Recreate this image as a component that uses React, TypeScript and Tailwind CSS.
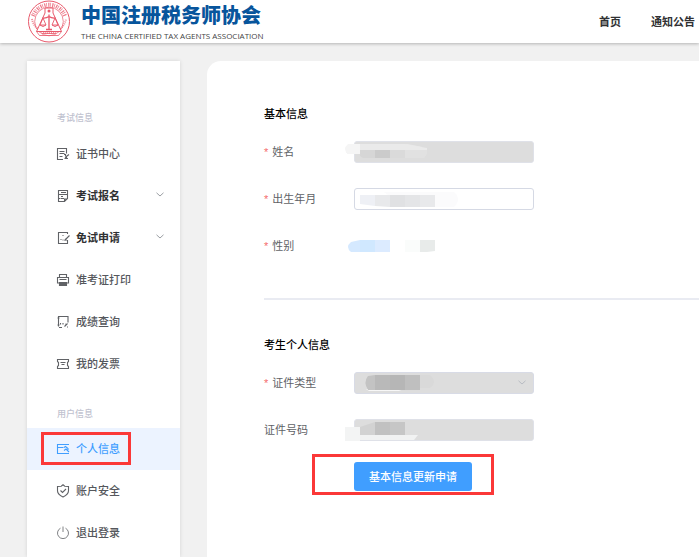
import type { ReactNode } from 'react';

type IconName = 'certificate' | 'signup' | 'exempt' | 'print' | 'score' | 'invoice' | 'profile' | 'security' | 'logout';

const iconShapes: Record<IconName, ReactNode> = {
  certificate: (
    <>
      <path d="M7 12.500H1.500V1.500h9v5M3.500 4.500h5M3.500 6.500h5M3.500 9.500h3" />
      <path d="M8 7.500h1.500v1.500M13 7.500l-4 3M10.500 9.500v2.500M8.500 11.500H12" />
    </>
  ),
  signup: <path d="M2.500 12.500v-11h9v8l-3 3zM2.500 5.500h9M5 3.500h5M5 7.500h2M2.500 9.500h2M5 9.500h3M8.500 12.500v-2.500h3" />,
  exempt: (
    <>
      <path d="M11.500 3V1.500h-9v11h9V9" />
      <path d="M13.500 4.500L8.500 9.500M9 8l1.500 1.500M6.500 9h1M6.500 4.500h1M4.500 8.500h1" />
    </>
  ),
  print: (
    <>
      <path d="M3.500 4.500v-3h7v3M3 10H1.500V4.500h11V10H11M3.500 6.500h7" />
      <path d="M3.500 9.500h7v3h-7z" fill="currentColor" />
    </>
  ),
  score: (
    <>
      <path d="M2.500 11.500v-10h9.500v6M1.500 3h2M1.500 10h2M3 12.500h3" />
      <path d="M4.500 8v1.500M7 8v1.500M8.500 11.500l3-3M9 9h.5M11 12h1" />
    </>
  ),
  invoice: <path d="M1.500 2.500h11v2L11.500 5.500v3l1 1v2h-11v-2l1-1v-3l-1-1zM4.500 5.500h5M5.500 7.500h3" />,
  profile: (
    <>
      <path d="M13 2.500H1.500v9H13M1.500 5.500h6" />
      <path d="M8 5.500l1.500-1L12 6.500V8M8 8.500l2-1.500 3 3" />
    </>
  ),
  security: (
    <>
      <path d="M7 .8l1.800 1.400 3.700.3v4.300C12.500 9.500 9.500 11.800 7 13 4.500 11.800 1.500 9.500 1.500 6.800V2.500l3.700-.3z" />
      <path d="M4.500 6.500l2 2 3.500-3.500" />
    </>
  ),
  logout: <path d="M4.500 2.200a5.500 5.500 0 1 0 5 0M7 .5v5.500" strokeWidth="0.8" />,
};

function Icon({ name }: { name: IconName }) {
  return (
    <svg viewBox="0 0 14 14" className="size-3.5 shrink-0 text-[#606266] group-aria-[current=page]:text-[#409eff]" fill="none" stroke="currentColor" strokeWidth="1.1" aria-hidden="true">
      {iconShapes[name]}
    </svg>
  );
}

function Chevron({ className }: { className: string }) {
  return (
    <svg viewBox="0 0 8 5" className={className} fill="none" stroke="currentColor" strokeWidth="0.9" aria-hidden="true">
      <path d="M.5 .8L4 4 7.500 .8" />
    </svg>
  );
}

function Seal() {
  return (
    <svg viewBox="0 0 44 44" className="size-11 shrink-0" fill="none" stroke="#e8596b" aria-hidden="true">
      <circle cx="22" cy="21.500" r="20.500" strokeWidth="1" />
      <path d="M6 16A17 17 0 0 1 38 16" strokeWidth="4" strokeDasharray="1.200 .8 .7 1.300" opacity=".8" />
      <path d="M5 19a17.300 17.300 0 0 0 34 0" strokeWidth="2" strokeDasharray="1 1" opacity=".7" />
      <circle cx="22" cy="21.500" r="14.300" strokeWidth=".7" />
      <path d="M18 8h8v5l8.500 18.500H9.500L18 13z" fill="#fff" strokeWidth="1" />
      <path d="M9.500 31.500l3 4h19l3-4M15 33.500h14" strokeWidth=".8" />
      <circle cx="22" cy="11" r="1.500" fill="#e8596b" stroke="none" />
      <path d="M22 14.500V29M15.500 18q3.500.5 6.500-1.500 3 2 6.500 1.500M19 29.500h6" strokeWidth="1.300" />
      <path d="M16 18l-3 7h6zM28 18l-3 7h6z" strokeWidth=".9" />
      <path d="M13 25q3 3 6 0M25 25q3 3 6 0" />
    </svg>
  );
}

interface Item {
  icon: IconName;
  label: string;
  group?: boolean;
  active?: boolean;
}

const examItems: Item[] = [
  { icon: 'certificate', label: '证书中心' },
  { icon: 'signup', label: '考试报名', group: true },
  { icon: 'exempt', label: '免试申请', group: true },
  { icon: 'print', label: '准考证打印' },
  { icon: 'score', label: '成绩查询' },
  { icon: 'invoice', label: '我的发票' },
];

const userItems: Item[] = [
  { icon: 'profile', label: '个人信息', active: true },
  { icon: 'security', label: '账户安全' },
  { icon: 'logout', label: '退出登录' },
];

function MenuItem({ item }: { item: Item }) {
  const row = 'group relative flex h-[42px] w-full items-center gap-1.5 pl-[29px] pr-4';
  if (item.group) {
    return (
      <li>
        <button type="button" className={`${row} text-[#303133]`}>
          <Icon name={item.icon} />
          <span className="font-bold">{item.label}</span>
          <Chevron className="mb-1 ml-auto h-[5px] w-2 text-[#909399]" />
        </button>
      </li>
    );
  }
  return (
    <li>
      <a href="#" aria-current={item.active ? 'page' : undefined} className={`${row} ${item.active ? 'bg-[#ecf3ff] text-[#409eff]' : 'text-[#55575c]'}`}>
        <Icon name={item.icon} />
        <span className="font-medium">{item.label}</span>
        {item.active && <span className="absolute bottom-[5px] left-3.5 top-1 w-[90px] border-3 border-[#fb3838]" />}
      </a>
    </li>
  );
}

function Row({ id, label, required, children }: { id: string; label: string; required?: boolean; children: ReactNode }) {
  return (
    <div className="flex h-[47px] items-center">
      <label htmlFor={id} className="w-[90px] shrink-0 text-[#606266]">
        {required && <span className="mr-1 text-[#f56c6c]">*</span>}
        {label}
      </label>
      <div className="relative h-[22px] w-[180px]">{children}</div>
    </div>
  );
}

function Smudge({ children }: { children: ReactNode }) {
  return (
    <svg viewBox="0 0 120 22" className="pointer-events-none absolute -left-2.5 top-0 h-[22px] w-[120px]" aria-hidden="true">
      {children}
    </svg>
  );
}

const field = 'block h-full w-full rounded-[3px] border px-2 outline-none';

export default function App() {
  return (
    <div className="flex min-h-screen flex-col bg-[#f1f1f1] font-['Liberation_Sans','Noto_Sans_CJK_SC',sans-serif] text-[11px] leading-4">
      <header className="relative flex h-[43px] shrink-0 items-center justify-between bg-white pl-[27px] pr-1 shadow-[0_1px_3px_rgba(0,0,0,0.25)]">
        <div className="flex items-center gap-2.5">
          <Seal />
          <div className="whitespace-nowrap pt-1">
            <div className="text-[20px] font-black leading-6 text-[#07559c]">中国注册税务师协会</div>
            <div className="font-['Open_Sans','Noto_Sans',sans-serif] text-[8px] font-medium leading-4 text-[#444]">
              THE CHINA CERTIFIED TAX AGENTS ASSOCIATION
            </div>
          </div>
        </div>
        <nav className="flex gap-[30px] whitespace-nowrap font-bold text-[#303133]">
          <a href="#">首页</a>
          <a href="#">通知公告</a>
        </nav>
      </header>

      <div className="flex grow gap-[27px] pl-[27px] pt-[18px]">
        <aside className="w-[153px] shrink-0 bg-white shadow-[0_0_4px_rgba(0,0,0,0.12)]">
          <h2 className="pb-[7px] pl-[30px] pt-[49px] text-[9px] font-medium text-[#bfc2cf]">考试信息</h2>
          <ul>
            {examItems.map((item) => (
              <MenuItem key={item.label} item={item} />
            ))}
          </ul>
          <h2 className="pb-1.5 pl-[30px] pt-[21px] text-[9px] font-medium text-[#bfc2cf]">用户信息</h2>
          <ul>
            {userItems.map((item) => (
              <MenuItem key={item.label} item={item} />
            ))}
          </ul>
        </aside>

        <main className="grow rounded-tl-[14px] bg-white pl-[57px] pt-[45px]">
          <form>
            <section>
              <h3 className="font-medium text-black">基本信息</h3>
              <div className="mt-1.5">
                <Row id="name" label="姓名" required>
                  <input id="name" disabled className={`${field} border-[#dfe1e8] bg-[#ddd]`} />
                  <Smudge>
                    <path d="M8 3h55l15 3v3H16v4H4q-6-5 4-10z" fill="#eaeaea" />
                    <path d="M4 3h12v10H4q-6-5 0-10z" fill="#f5f5f5" />
                    <path d="M16 9h15v8H19l-3-2z" fill="#d6d6d6" />
                    <path d="M31 9h15v8H31z" fill="#cbcbcb" />
                    <path d="M46 9h15v8H46z" fill="#dadada" />
                    <path d="M61 9h22v4l-3 4H61z" fill="#e1e1e1" />
                    <path d="M61 3l22 4v2H61z" fill="#eaeaea" />
                  </Smudge>
                </Row>
                <Row id="birth" label="出生年月" required>
                  <input id="birth" className={`${field} border-[#d5d9e4] bg-white`} />
                  <Smudge>
                    <path d="M40 4h70q8 7 0 15H60z" fill="#fbfbfc" />
                    <path d="M16 7h15v11l-15-2z" fill="#eef0f5" />
                    <path d="M31 7h15v12l-15-1z" fill="#e8e9eb" />
                    <path d="M46 7h15v12H46z" fill="#e0e1e3" />
                    <path d="M61 7h15v12H61z" fill="#e4e5e7" />
                    <path d="M76 7h15v12H76z" fill="#e8e9eb" />
                  </Smudge>
                </Row>
                <div className="flex h-[47px] items-center">
                  <div className="w-[90px] shrink-0 text-[#606266]">
                    <span className="mr-1 text-[#f56c6c]">*</span>性别
                  </div>
                  <div className="relative h-[22px] w-[180px]">
                    <Smudge>
                      <path d="M16 5v12H7q-6-5 0-10z" fill="#d5e9ff" />
                      <path d="M16 5h15v12H16z" fill="#d0e8ff" />
                      <path d="M31 5h15v12H31z" fill="#dcebff" />
                      <path d="M61 5h15v12H61z" fill="#fafcfb" />
                      <path d="M76 5h15v11l-8 1h-7z" fill="#e8ebea" />
                    </Smudge>
                  </div>
                </div>
              </div>
            </section>

            <hr className="mt-[29px] border-t-2 border-[#e9ebf2]" />

            <section className="pt-[37px]">
              <h3 className="font-medium text-black">考生个人信息</h3>
              <div className="mt-1.5">
                <Row id="id-type" label="证件类型" required>
                  <select id="id-type" disabled className={`${field} appearance-none border-[#d8dbe6] bg-[#ddd] opacity-100`} />
                  <Chevron className="pointer-events-none absolute right-2 top-2 h-[5px] w-2 text-[#b4b8c0]" />
                  <Smudge>
                    <path d="M76 3h10q8 7 0 13H76z" fill="#d9d9d9" />
                    <path d="M22 17h38l-5 2H25z" fill="#f7f7f7" />
                    <path d="M31 3v15h-7q-5-8 0-14z" fill="#c3c3c3" />
                    <path d="M31 3h15v15H31z" fill="#b9b9b9" />
                    <path d="M46 3h15v15H46z" fill="#b6b6b6" />
                    <path d="M61 3h15v15H61z" fill="#bfbfbf" />
                  </Smudge>
                </Row>
                <Row id="id-number" label="证件号码">
                  <input id="id-number" disabled className={`${field} border-[#dfe1e8] bg-[#ddd]`} />
                  <Smudge>
                    <path d="M1 8h15v14H1z" fill="#f3f4f4" />
                    <path d="M16 8l15-5v13H16z" fill="#d2d2d2" />
                    <path d="M31 3h15v13H31z" fill="#c1c1c1" />
                    <path d="M46 3h15v13H46z" fill="#c6c6c6" />
                    <path d="M16 16h58l-4 5H16z" fill="#f1f2f2" />
                  </Smudge>
                </Row>
              </div>
              <div className="ml-12 mt-px w-[182px] border-3 border-[#fb3838] pb-px pl-[39px] pt-[5px]">
                <button type="button" className="block h-[29px] w-[118px] rounded-[3px] bg-[#409eff] font-medium text-white">
                  基本信息更新申请
                </button>
              </div>
            </section>
          </form>
        </main>
      </div>
    </div>
  );
}
